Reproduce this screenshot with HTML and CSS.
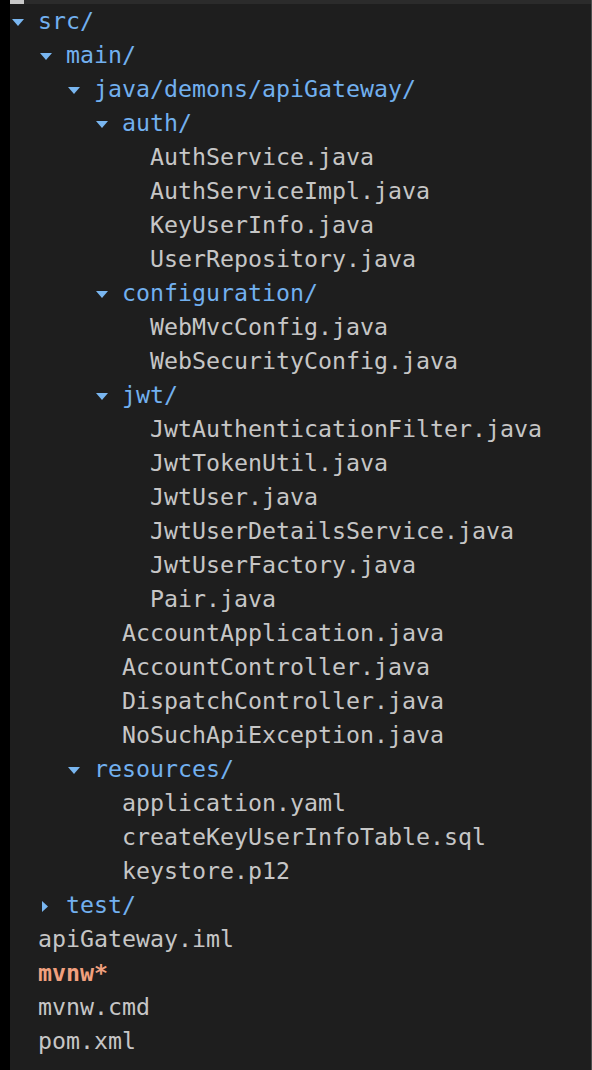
FILE: index.html
```html
<!DOCTYPE html>
<html>
<head>
<meta charset="utf-8">
<link rel="stylesheet" href="styles.css">
</head>
<body>
<div class="frame">
  <div class="gutter"></div>
  <div class="panel">
    <div class="topbar"><div class="thumb"></div></div>
    <div class="tree">
      <div class="row dir d0"><span class="tw"><svg class="down" viewBox="0 0 12 7"><polygon points="0,0 12,0 6,7"/></svg></span>src/</div>
      <div class="row dir d1"><span class="tw"><svg class="down" viewBox="0 0 12 7"><polygon points="0,0 12,0 6,7"/></svg></span>main/</div>
      <div class="row dir d2"><span class="tw"><svg class="down" viewBox="0 0 12 7"><polygon points="0,0 12,0 6,7"/></svg></span>java/demons/apiGateway/</div>
      <div class="row dir d3"><span class="tw"><svg class="down" viewBox="0 0 12 7"><polygon points="0,0 12,0 6,7"/></svg></span>auth/</div>
      <div class="row file d4"><span class="tw"></span>AuthService.java</div>
      <div class="row file d4"><span class="tw"></span>AuthServiceImpl.java</div>
      <div class="row file d4"><span class="tw"></span>KeyUserInfo.java</div>
      <div class="row file d4"><span class="tw"></span>UserRepository.java</div>
      <div class="row dir d3"><span class="tw"><svg class="down" viewBox="0 0 12 7"><polygon points="0,0 12,0 6,7"/></svg></span>configuration/</div>
      <div class="row file d4"><span class="tw"></span>WebMvcConfig.java</div>
      <div class="row file d4"><span class="tw"></span>WebSecurityConfig.java</div>
      <div class="row dir d3"><span class="tw"><svg class="down" viewBox="0 0 12 7"><polygon points="0,0 12,0 6,7"/></svg></span>jwt/</div>
      <div class="row file d4"><span class="tw"></span>JwtAuthenticationFilter.java</div>
      <div class="row file d4"><span class="tw"></span>JwtTokenUtil.java</div>
      <div class="row file d4"><span class="tw"></span>JwtUser.java</div>
      <div class="row file d4"><span class="tw"></span>JwtUserDetailsService.java</div>
      <div class="row file d4"><span class="tw"></span>JwtUserFactory.java</div>
      <div class="row file d4"><span class="tw"></span>Pair.java</div>
      <div class="row file d3"><span class="tw"></span>AccountApplication.java</div>
      <div class="row file d3"><span class="tw"></span>AccountController.java</div>
      <div class="row file d3"><span class="tw"></span>DispatchController.java</div>
      <div class="row file d3"><span class="tw"></span>NoSuchApiException.java</div>
      <div class="row dir d2"><span class="tw"><svg class="down" viewBox="0 0 12 7"><polygon points="0,0 12,0 6,7"/></svg></span>resources/</div>
      <div class="row file d3"><span class="tw"></span>application.yaml</div>
      <div class="row file d3"><span class="tw"></span>createKeyUserInfoTable.sql</div>
      <div class="row file d3"><span class="tw"></span>keystore.p12</div>
      <div class="row dir d1"><span class="tw"><svg class="right" viewBox="0 0 6 11"><polygon points="0,0 6,5.5 0,11"/></svg></span>test/</div>
      <div class="row file d0"><span class="tw"></span>apiGateway.iml</div>
      <div class="row exec d0"><span class="tw"></span>mvnw*</div>
      <div class="row file d0"><span class="tw"></span>mvnw.cmd</div>
      <div class="row file d0"><span class="tw"></span>pom.xml</div>
    </div>
  </div>
</div>
</body>
</html>
```

FILE: styles.css
```css
html, body {
  margin: 0;
  padding: 0;
  background: #000;
}

.frame {
  display: flex;
  width: 592px;
  height: 1070px;
}

.gutter {
  width: 10px;
  background: #000;
}

.panel {
  flex: 1;
  display: flex;
  flex-direction: column;
  background: #1e1e1e;
  border-right: 1px solid #4e4e4e;
}

.topbar {
  height: 4px;
  background: #2b2b2b;
  display: flex;
}

.thumb {
  width: 14px;
  background: #c9c9c9;
}

.tree {
  display: flex;
  flex-direction: column;
  font-family: "DejaVu Sans Mono", "Liberation Mono", monospace;
  font-size: 23.25px;
  line-height: 34px;
  white-space: pre;
}

.row {
  display: flex;
  align-items: center;
  height: 34px;
}

.tw {
  width: 28px;
  height: 34px;
  flex: none;
  display: flex;
  align-items: center;
}

.down {
  width: 12px;
  height: 7px;
  margin-left: 2px;
  margin-top: 2px;
  fill: #79b6f0;
}

.right {
  width: 6px;
  height: 11px;
  margin-left: 4px;
  margin-top: 2px;
  fill: #79b6f0;
}

.dir { color: #72b0ef; }
.file { color: #c6c6c6; }
.exec { color: #f0a07e; font-weight: bold; }

.d0 { padding-left: 0; }
.d1 { padding-left: 28px; }
.d2 { padding-left: 56px; }
.d3 { padding-left: 84px; }
.d4 { padding-left: 112px; }
```
